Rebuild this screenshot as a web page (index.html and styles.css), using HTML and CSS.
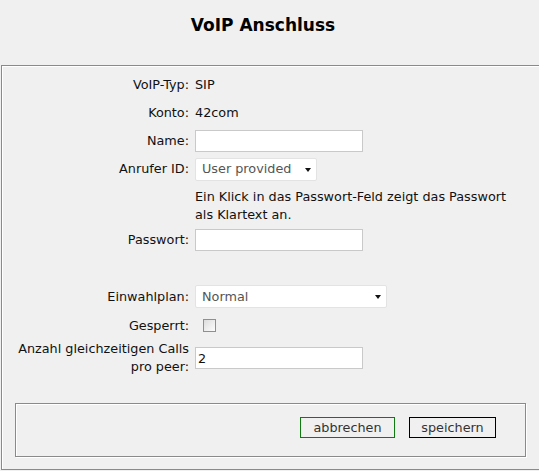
FILE: index.html
```html
<!DOCTYPE html>
<html lang="de">
<head>
<meta charset="utf-8">
<title>VoIP Anschluss</title>
<link rel="stylesheet" href="styles.css">
</head>
<body>
<h1 class="title">VoIP Anschluss</h1>
<div class="panel">
  <div class="form">
    <div class="row">
      <span class="label">VoIP-Typ:</span>
      <span class="value">SIP</span>
    </div>
    <div class="row">
      <span class="label">Konto:</span>
      <span class="value">42com</span>
    </div>
    <div class="row">
      <span class="label">Name:</span>
      <span class="value"><input class="text" type="text"></span>
    </div>
    <div class="row">
      <span class="label">Anrufer ID:</span>
      <span class="value">
        <span class="select select-short"><select><option>User provided</option></select></span>
      </span>
    </div>
    <div class="row row-help">
      <span class="label"></span>
      <span class="value help">Ein Klick in das Passwort-Feld zeigt das Passwort als Klartext an.</span>
    </div>
    <div class="row">
      <span class="label">Passwort:</span>
      <span class="value"><input class="text" type="text"></span>
    </div>
    <div class="row row-spacer"></div>
    <div class="row row-29">
      <span class="label">Einwahlplan:</span>
      <span class="value">
        <span class="select select-wide"><select><option>Normal</option></select></span>
      </span>
    </div>
    <div class="row row-29">
      <span class="label">Gesperrt:</span>
      <span class="value"><input class="check" type="checkbox"></span>
    </div>
    <div class="row row-calls">
      <span class="label label-wrap">Anzahl gleichzeitigen Calls pro peer:</span>
      <span class="value"><input class="text" type="text" value="2"></span>
    </div>
  </div>
  <div class="actions">
    <button class="btn btn-cancel" type="button">abbrechen</button>
    <button class="btn btn-save" type="button">speichern</button>
  </div>
</div>
</body>
</html>
```
FILE: styles.css
```css
html, body {
  margin: 0;
  padding: 0;
  background: #f0f0f0;
  overflow: hidden;
}
body {
  font-family: "DejaVu Sans", Verdana, sans-serif;
  font-size: 12.8px;
  color: #111;
  width: 539px;
  height: 471px;
}
.title {
  margin: 0;
  height: 65px;
  box-sizing: border-box;
  padding: 14px 13px 0 0;
  text-align: center;
  font-size: 17px;
  font-weight: bold;
  line-height: 22px;
  color: #000;
}
.panel {
  margin-left: 1px;
  border: 1px solid #8a8a8a;
  border-right: 0;
  box-shadow: inset 1px 1px 0 #fff;
  height: 405px;
  box-sizing: border-box;
  padding-top: 5px;
}
.form {
  display: flex;
  flex-direction: column;
}
.row {
  display: grid;
  grid-template-columns: 187px 1fr;
  column-gap: 6px;
  align-items: center;
  min-height: 28px;
  line-height: 18px;
}
.row-help {
  align-items: start;
  height: 43px;
  padding-top: 5px;
  box-sizing: border-box;
}
.row-spacer { height: 28px; }
.row-29 { min-height: 29px; }
.row-calls { min-height: 36px; }
.label {
  text-align: right;
}
.label-wrap {
  padding-left: 8px;
}
.value {
  display: flex;
  align-items: center;
}
.help {
  display: block;
  width: 318px;
}
.text {
  box-sizing: border-box;
  width: 168px;
  height: 22px;
  margin: 0;
  padding: 0 2px;
  border: 1px solid #c9c9c9;
  background: #fff;
  font: inherit;
  color: #111;
  outline: none;
}
.select {
  position: relative;
  display: inline-block;
}
.select select {
  appearance: none;
  -webkit-appearance: none;
  box-sizing: border-box;
  height: 23px;
  margin: 0;
  padding: 0 0 0 6px;
  border: 1px solid #e3e3e3;
  border-radius: 2px;
  background: #fff;
  font: inherit;
  color: #555;
  outline: none;
}
.select-short select { width: 122px; }
.select-wide select { width: 192px; }
.select::after {
  content: "";
  position: absolute;
  right: 6px;
  top: 10px;
  border-left: 3.5px solid transparent;
  border-right: 3.5px solid transparent;
  border-top: 4px solid #111;
}
.check {
  appearance: none;
  -webkit-appearance: none;
  box-sizing: border-box;
  width: 13px;
  height: 13px;
  margin: 0 0 0 8px;
  border: 1px solid #8e8f8f;
  background: linear-gradient(135deg, #dcdcdc, #fdfdfd);
}
.actions {
  margin: 27px 13px 0 13px;
  height: 54px;
  box-sizing: border-box;
  border: 1px solid #8a8a8a;
  box-shadow: inset 1px 1px 0 #fff, 1px 1px 0 #fff;
  display: flex;
  justify-content: flex-end;
  align-items: flex-start;
  gap: 14px;
  padding: 13px 29px 0 0;
}
.btn {
  box-sizing: border-box;
  height: 21px;
  margin: 0;
  padding: 0;
  background: #f0f0f0;
  font: inherit;
  color: #333;
  border: 1px solid #000;
  cursor: pointer;
}
.btn-cancel {
  width: 95px;
  border-color: #0f7a0f;
}
.btn-save {
  width: 87px;
}
```
